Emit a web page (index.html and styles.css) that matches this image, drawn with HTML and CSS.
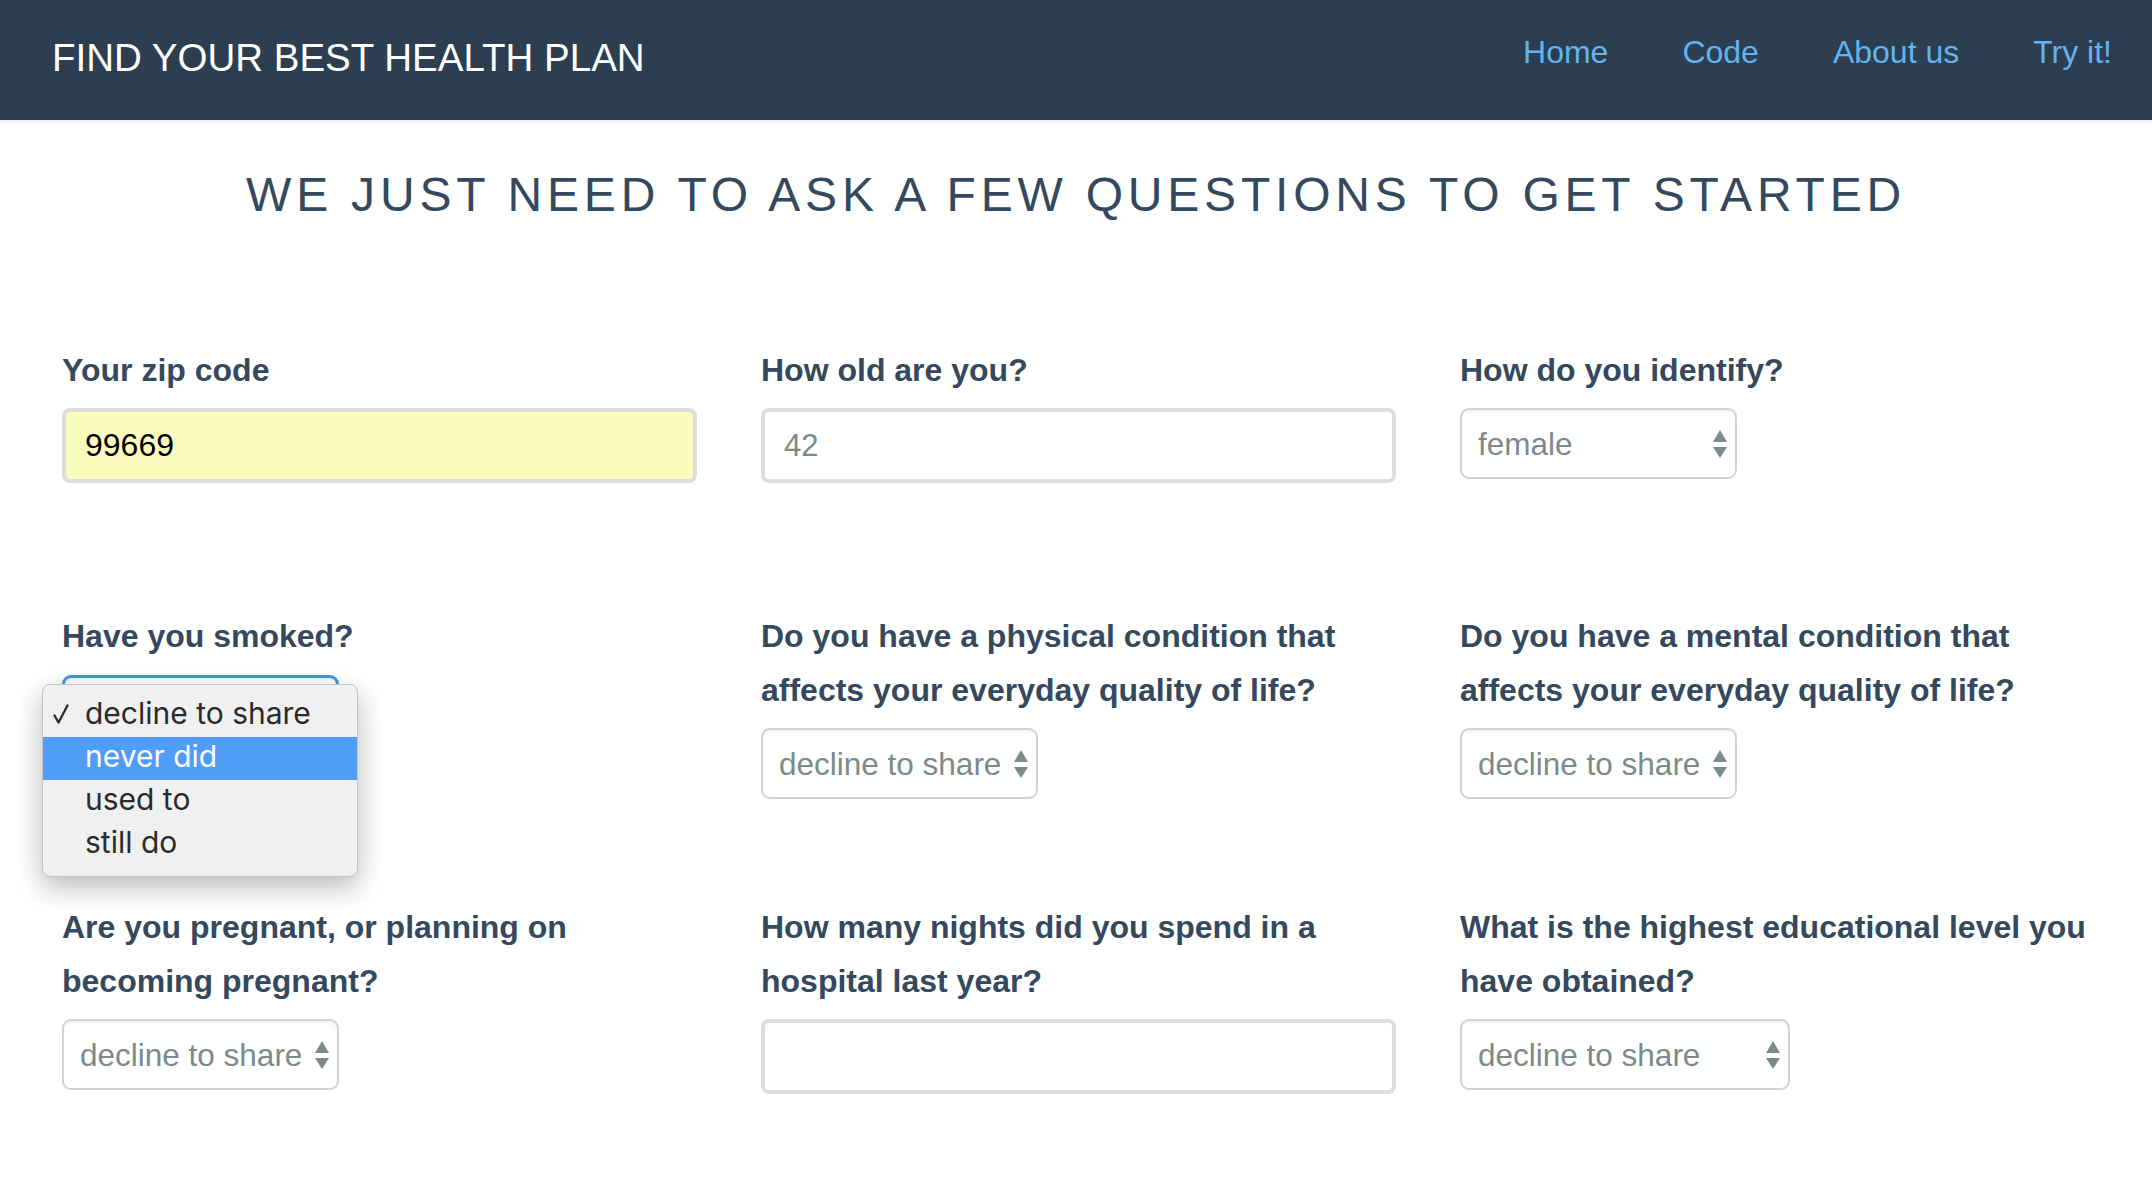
FILE: index.html
```html
<!DOCTYPE html>
<html lang="en">
<head>
<meta charset="utf-8">
<title>Find your best health plan</title>
<link rel="stylesheet" href="styles.css">
</head>
<body>
<header class="navbar">
  <a class="brand" href="#">FIND YOUR BEST HEALTH PLAN</a>
  <ul class="nav">
    <li><a href="#">Home</a></li>
    <li><a href="#">Code</a></li>
    <li><a href="#">About us</a></li>
    <li><a href="#">Try it!</a></li>
  </ul>
</header>

<main class="content">
  <h1 class="title">WE JUST NEED TO ASK A FEW QUESTIONS TO GET STARTED</h1>

  <form class="questions">
    <div class="q-row q-row-first">
      <div class="field">
        <label class="q-label">Your zip code</label>
        <input class="text-input autofilled" type="text" value="99669">
      </div>
      <div class="field">
        <label class="q-label">How old are you?</label>
        <input class="text-input" type="text" value="42">
      </div>
      <div class="field">
        <label class="q-label">How do you identify?</label>
        <div class="select-wrap w-sm">
          <select class="select"><option>female</option></select>
          <svg class="arrows" width="14" height="28" viewBox="0 0 14 28"><polygon points="7,0 14,12 0,12"/><polygon points="0,17 14,17 7,28"/></svg>
        </div>
      </div>
    </div>

    <div class="q-row q-row-second">
      <div class="field">
        <label class="q-label">Have you smoked?</label>
        <div class="select-wrap w-sm">
          <select class="select focused"><option>decline to share</option></select>
          <svg class="arrows" width="14" height="28" viewBox="0 0 14 28"><polygon points="7,0 14,12 0,12"/><polygon points="0,17 14,17 7,28"/></svg>
          <div class="menu">
            <div class="menu-item"><svg class="check" width="16" height="20" viewBox="0 0 16 20"><path d="M1.5 11.5 L5.5 18.5 L14.5 1.5"/></svg>decline to share</div>
            <div class="menu-item active">never did</div>
            <div class="menu-item">used to</div>
            <div class="menu-item">still do</div>
          </div>
        </div>
      </div>
      <div class="field">
        <label class="q-label">Do you have a physical condition that affects your everyday quality of life?</label>
        <div class="select-wrap w-sm">
          <select class="select"><option>decline to share</option></select>
          <svg class="arrows" width="14" height="28" viewBox="0 0 14 28"><polygon points="7,0 14,12 0,12"/><polygon points="0,17 14,17 7,28"/></svg>
        </div>
      </div>
      <div class="field">
        <label class="q-label">Do you have a mental condition that affects your everyday quality of life?</label>
        <div class="select-wrap w-sm">
          <select class="select"><option>decline to share</option></select>
          <svg class="arrows" width="14" height="28" viewBox="0 0 14 28"><polygon points="7,0 14,12 0,12"/><polygon points="0,17 14,17 7,28"/></svg>
        </div>
      </div>
    </div>

    <div class="q-row">
      <div class="field">
        <label class="q-label">Are you pregnant, or planning on becoming pregnant?</label>
        <div class="select-wrap w-sm">
          <select class="select"><option>decline to share</option></select>
          <svg class="arrows" width="14" height="28" viewBox="0 0 14 28"><polygon points="7,0 14,12 0,12"/><polygon points="0,17 14,17 7,28"/></svg>
        </div>
      </div>
      <div class="field">
        <label class="q-label">How many nights did you spend in a hospital last year?</label>
        <input class="text-input" type="text" value="">
      </div>
      <div class="field">
        <label class="q-label">What is the highest educational level you have obtained?</label>
        <div class="select-wrap w-lg">
          <select class="select"><option>decline to share</option></select>
          <svg class="arrows" width="14" height="28" viewBox="0 0 14 28"><polygon points="7,0 14,12 0,12"/><polygon points="0,17 14,17 7,28"/></svg>
        </div>
      </div>
    </div>
  </form>
</main>
</body>
</html>
```

FILE: styles.css
```css
* {
  box-sizing: border-box;
}

html, body {
  margin: 0;
  padding: 0;
  background: #ffffff;
  font-family: "Liberation Sans", Arial, Helvetica, sans-serif;
  color: #34495e;
}

/* ---------- navbar ---------- */
.navbar {
  height: 120px;
  background: #2c3e50;
  display: flex;
  justify-content: space-between;
  align-items: flex-start;
  box-shadow: 0 2px 2px rgba(0, 0, 0, 0.07);
}

.brand {
  display: block;
  margin-left: 52px;
  height: 116px;
  line-height: 116px;
  font-size: 38.5px;
  color: #ffffff;
  text-decoration: none;
  white-space: nowrap;
}

.nav {
  display: flex;
  list-style: none;
  margin: 0 3px 0 0;
  padding: 0;
}

.nav a {
  display: block;
  padding: 0 37px;
  line-height: 104px;
  font-size: 32px;
  color: #62b3ee;
  text-decoration: none;
  white-space: nowrap;
}

/* ---------- heading ---------- */
.title {
  margin: 49px 0 0;
  text-align: center;
  font-size: 48px;
  line-height: 52.8px;
  font-weight: 400;
  letter-spacing: 4.8px;
  color: #34495e;
}

/* ---------- form ---------- */
.questions {
  margin: 122px 0 0;
  padding: 0 0 80px 62px;
}

.q-row {
  display: grid;
  grid-template-columns: repeat(3, 635px);
  column-gap: 64px;
  align-items: start;
}

.q-row-first {
  margin-bottom: 127px;
}

.q-row-second {
  margin-bottom: 102px;
}

.field {
  display: flex;
  flex-direction: column;
  align-items: flex-start;
}

.q-label {
  display: block;
  margin: 0 0 11px;
  font-size: 32px;
  line-height: 53.5px;
  font-weight: 700;
  color: #34495e;
}

.text-input {
  display: block;
  width: 635px;
  height: 75px;
  margin: 0;
  padding: 0 19px;
  border: 4px solid #dddddd;
  border-radius: 8px;
  background: #ffffff;
  font-family: "Liberation Sans", Arial, Helvetica, sans-serif;
  font-size: 31px;
  color: #7b8a8b;
  outline: none;
}

.text-input.autofilled {
  background: #fafcbe;
  color: #000000;
  font-size: 32px;
}

.select-wrap {
  position: relative;
  height: 71px;
}

.w-sm {
  width: 277px;
}

.w-lg {
  width: 330px;
}

.select {
  display: block;
  width: 100%;
  height: 71px;
  margin: 0;
  padding: 0 36px 0 16px;
  -webkit-appearance: none;
  appearance: none;
  border: 2px solid #d2d2d2;
  border-radius: 9px;
  background: #ffffff;
  box-shadow: inset 0 2px 3px rgba(0, 0, 0, 0.05);
  font-family: "Liberation Sans", Arial, Helvetica, sans-serif;
  font-size: 31.5px;
  color: #7b8a8b;
  outline: none;
}

.select.focused {
  border-color: #3d97e6;
  border-width: 3px;
}

.arrows {
  position: absolute;
  right: 10px;
  top: 22px;
  fill: #7b8a8b;
  pointer-events: none;
}

/* ---------- open dropdown menu ---------- */
.menu {
  position: absolute;
  left: -20px;
  top: 9px;
  width: 316px;
  padding: 9px 0 10px;
  background: #f0f0f0;
  border: 1px solid #c2c2c2;
  border-radius: 8px;
  box-shadow: 0 10px 28px rgba(0, 0, 0, 0.28);
  font-family: Inter, "Liberation Sans", Arial, sans-serif;
  font-size: 30px;
  color: #2b2b2b;
  z-index: 10;
}

.menu-item {
  position: relative;
  height: 43px;
  line-height: 38px;
  padding: 0 0 5px 42px;
  white-space: nowrap;
}

.menu-item.active {
  background: #4f9cf9;
  color: #ffffff;
}

.check {
  position: absolute;
  left: 10px;
  top: 10px;
  fill: none;
  stroke: #2b2b2b;
  stroke-width: 2.3;
  stroke-linecap: round;
  stroke-linejoin: round;
}
```
